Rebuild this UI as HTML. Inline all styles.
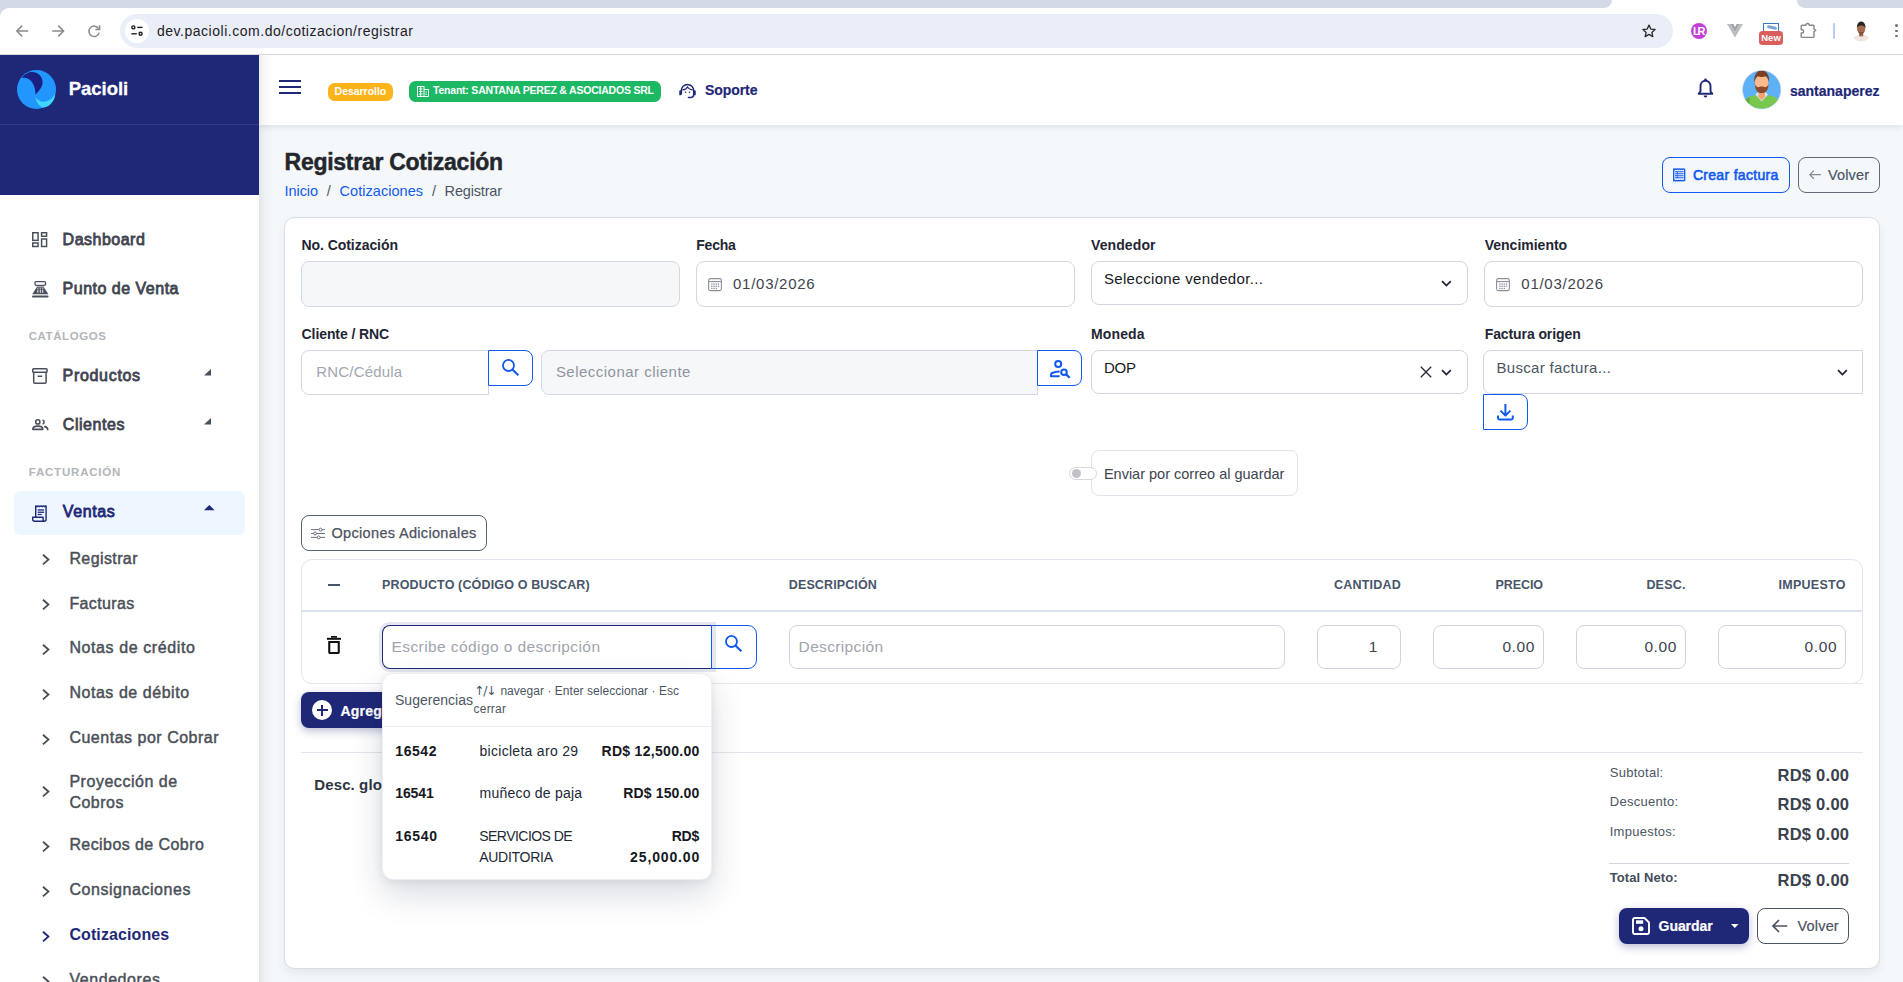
<!DOCTYPE html>
<html lang="es">
<head>
<meta charset="utf-8">
<title>Registrar Cotización - Pacioli</title>
<style>
html,body{margin:0;padding:0;}
body{width:1903px;height:982px;overflow:hidden;position:relative;background:#f5f8fb;font-family:"Liberation Sans",sans-serif;}
.b{position:absolute;box-sizing:border-box;display:block;}
.t{position:absolute;white-space:nowrap;line-height:1;display:block;}
svg{overflow:visible;}
</style>
</head>
<body>
<header class="topbar">
<div class="b" style="left:259px;top:55px;width:1644px;height:70px;background:#fff;box-shadow:0 2px 6px rgba(30,40,90,.12);"></div>
<div class="b" style="left:279.3px;top:79.8px;width:21.4px;height:2.4px;background:#1f2877;"></div>
<div class="b" style="left:279.3px;top:85.7px;width:21.4px;height:2.4px;background:#1f2877;"></div>
<div class="b" style="left:279.3px;top:91.5px;width:21.4px;height:2.4px;background:#1f2877;"></div>
<div class="b" style="left:328px;top:83px;width:65px;height:18px;background:#fdb31c;border-radius:6.500px;"></div>
<span class="t" style="left:334.60px;top:85.75px;font-size:10.5px;color:#fff;font-weight:700;letter-spacing:-0.037px;">Desarrollo</span>
<div class="b" style="left:409px;top:81px;width:252px;height:21px;background:#1cb863;border-radius:6.500px;"></div>
<svg class="b" style="left:416.5px;top:86px;" width="12" height="11" viewBox="0 0 12 11"><g fill="none" stroke="#fff" stroke-width="1"><rect x="0.5" y="0.5" width="6.5" height="10"/><path d="M7 3.500h4.500v7H7M2 3h3.500M2 5.500h3.500M2 8h3.500M8.500 6h1.500M8.500 8.200h1.500M3.700 0.500v10"/></g></svg>
<span class="t" style="left:433.00px;top:84.75px;font-size:10.5px;color:#fff;font-weight:700;letter-spacing:-0.213px;">Tenant: SANTANA PEREZ &amp; ASOCIADOS SRL</span>
<svg class="b" style="left:679px;top:83.2px;" width="17" height="15.5" viewBox="0 0 17 15.500"><g fill="none" stroke="#1f2877" stroke-linecap="round"><path d="M2.300 11V7.600a6.200 6.200 0 0 1 12.400 0V11" stroke-width="1.500"/><path d="M1.200 8.200v3.200M15.800 8.200v3.200" stroke-width="1.900"/><path d="M14.700 11.600c0 1.800-1.200 3-3 3H9.400" stroke-width="1.500"/><path d="M3.800 6.900c2.300-.2 3.900-1.200 4.700-2.900 1 1.800 2.600 2.700 4.700 2.900" stroke-width="1.200"/></g><circle cx="6.500" cy="9.300" r=".8" fill="#1f2877"/><circle cx="10.500" cy="9.300" r=".8" fill="#1f2877"/></svg>
<span class="t" style="left:705.00px;top:83.00px;font-size:14px;color:#1f2877;font-weight:700;letter-spacing:-0.065px;-webkit-text-stroke:.2px #1f2877;">Soporte</span>
<svg class="b" style="left:1697px;top:78px;" width="17" height="20" viewBox="0 0 17 20"><path d="M8.500 2.800c-3 0-5 2.400-5 5.400v5.300l-1.800 2.200h13.600l-1.800-2.200V8.200c0-3-2-5.400-5-5.400z" fill="none" stroke="#1f2877" stroke-width="1.900" stroke-linejoin="round"/><circle cx="8.500" cy="1.800" r="1.300" fill="#1f2877"/><path d="M6.600 17.600a1.900 1.900 0 0 0 3.800 0z" fill="#1f2877"/></svg>
<svg class="b" style="left:1742.2px;top:70.2px;" width="39.4" height="39.4" viewBox="0 0 39 39"><defs><clipPath id="ua"><circle cx="19.500" cy="19.500" r="18.700"/></clipPath></defs><circle cx="19.500" cy="19.500" r="19.500" fill="#dde1e8"/><g clip-path="url(#ua)"><rect width="39" height="39" fill="#5db1f8"/><path d="M0 39c0-9 6-13.500 13-14h13c7 .5 13 5 13 14z" fill="#7ac74f"/><path d="M5 28c-2 2-3 6-3 11h6c-1-5-1-8 0-11.500z" fill="#62ab3d"/><path d="M13.300 24.300l6.200 6.900 6.200-6.900-2.600-2.600h-7.200z" fill="#dbe7f8"/><path d="M16.200 19h6.600v7.600l-3.300 3.600-3.300-3.600z" fill="#f3a474"/><ellipse cx="19.500" cy="12.800" rx="6.700" ry="8.300" fill="#fcb98b"/><path d="M12.800 14.200c0 6 3 8.900 6.700 8.900s6.700-2.900 6.700-8.900c-1 2.300-2.200 2.900-3.400 2.900-1.100-.9-5.500-.9-6.600 0-1.200 0-2.400-.6-3.400-2.900z" fill="#8b4a2b"/><path d="M12.300 12.300c-1-7.300 2.600-11.900 7.200-11.900s8.200 4.600 7.200 11.900c-.6-3-1.500-5.100-3.200-6.100-2.500 1-5.500 1-8 0-1.700 1-2.600 3.100-3.200 6.100z" fill="#7a3f22"/></g></svg>
<span class="t" style="left:1790.00px;top:84.00px;font-size:14px;color:#1f2877;font-weight:700;-webkit-text-stroke:.2px #1f2877;">santanaperez</span>
</header>
<aside class="sidebar">
<div class="b" style="left:259px;top:55px;width:14px;height:927px;background:linear-gradient(90deg,rgba(0,0,0,.075),rgba(0,0,0,.03) 35%,rgba(0,0,0,0));"></div>
<div class="b" style="left:0px;top:55px;width:259px;height:927px;background:#fff;"></div>
<div class="b" style="left:0px;top:55px;width:259px;height:140px;background:#1f2877;"></div>
<div class="b" style="left:0px;top:124px;width:259px;height:1px;background:rgba(255,255,255,.10);"></div>
<svg class="b" style="left:16.6px;top:69.9px;" width="39" height="39" viewBox="0 0 39 39"><circle cx="19.5" cy="19.5" r="19.5" fill="#2196fe"/><path d="M5 7.9C7.5 3.6 11.8 1.9 15 1.9c6 0 10.6 4.300 10.600 10.300 0 5-3.600 8.400-7 12.400-.4-4.500-.8-7.800-3-11.500-2.200-3.800-6.200-5.700-10.600-5.200z" fill="#1b1f82"/><path d="M18.300 27c2 3.200 5.200 4.900 8.500 4.800 4.700-.2 9.100-3.400 11.300-8.200.5 3.400-1.500 7.800-4.600 10.600-2.400 2.200-5 3.200-8 3.400-3.500-1.800-6.300-5.800-7.200-10.600z" fill="#3ed6ff"/></svg>
<span class="t" style="left:68.70px;top:80.25px;font-size:18.5px;color:#fff;font-weight:700;letter-spacing:-0.023px;-webkit-text-stroke:.3px #fff;">Pacioli</span>
<nav>
<svg class="b" style="left:32.2px;top:232.4px;" width="15.4" height="15.2" viewBox="0 0 15.400 15.200"><g fill="none" stroke="#4a505b" stroke-width="1.500"><rect x=".75" y=".75" width="5.300" height="7.600"/><rect x="9.600" y=".75" width="5" height="3.500"/><rect x=".75" y="11" width="5.300" height="3.500"/><rect x="9.600" y="7" width="5" height="7.500"/></g></svg>
<span class="t" style="left:62.60px;top:231.50px;font-size:16px;color:#3f4550;-webkit-text-stroke:.8px #3f4550;letter-spacing:0.490px;">Dashboard</span>
<svg class="b" style="left:31.8px;top:280.7px;" width="16.6" height="16.6" viewBox="0 0 16.600 16.600"><rect x="3" y=".7" width="10.600" height="3.600" rx="1.200" fill="#fff" stroke="#4a505b" stroke-width="1.300"/><rect x="4.600" y="4.900" width="7.400" height="1.400" fill="#a6a9ae"/><path d="M4.700 6.200h7.200l4.500 7.100H.2z" fill="#4a505b"/><rect x="0" y="14.500" width="16.600" height="2.100" rx="1" fill="#4a505b"/><g fill="#fff"><rect x="5.300" y="7.300" width="1.100" height="1"/><rect x="7.750" y="7.300" width="1.100" height="1"/><rect x="10.200" y="7.300" width="1.100" height="1"/><rect x="5.400" y="9" width=".9" height="2.800"/><rect x="7.850" y="9" width=".9" height="2.800"/><rect x="10.300" y="9" width=".9" height="2.800"/></g></svg>
<span class="t" style="left:62.60px;top:280.50px;font-size:16px;color:#3f4550;-webkit-text-stroke:.8px #3f4550;letter-spacing:0.498px;">Punto de Venta</span>
<span class="t" style="left:28.70px;top:331.25px;font-size:11.5px;color:#b3b5b9;font-weight:700;letter-spacing:0.585px;">CATÁLOGOS</span>
<svg class="b" style="left:32.2px;top:368px;" width="15.8" height="16" viewBox="0 0 15.800 16"><g fill="none" stroke="#4a505b" stroke-width="1.500" stroke-linejoin="round"><rect x=".75" y=".75" width="14.300" height="3.600" rx=".8"/><path d="M1.700 4.400v9.800c0 .6.400 1 1 1h10.400c.6 0 1-.4 1-1V4.400M5.600 8.300h4.600"/></g></svg>
<span class="t" style="left:62.60px;top:367.50px;font-size:16px;color:#3f4550;-webkit-text-stroke:.8px #3f4550;letter-spacing:0.682px;">Productos</span>
<svg class="b" style="left:203.8px;top:368.7px" width="7" height="6.500" viewBox="0 0 7 6.500"><path d="M7 0v6.500H0z" fill="#4a505b"/></svg>
<svg class="b" style="left:31.8px;top:419.4px;" width="16.5" height="11.2" viewBox="0 0 16.500 11.200"><g fill="none" stroke="#4a505b" stroke-width="1.600"><circle cx="5.800" cy="2.900" r="2.100"/><path d="M.8 10.400c0-2.200 2.500-3.300 5-3.300s5 1.100 5 3.300z" stroke-linejoin="round"/><path d="M10.600 .9a2.100 2.100 0 0 1 0 4M12.300 7.400c2 .5 3.400 1.400 3.400 3v.8"/></g></svg>
<span class="t" style="left:62.80px;top:416.50px;font-size:16px;color:#3f4550;-webkit-text-stroke:.8px #3f4550;letter-spacing:0.542px;">Clientes</span>
<svg class="b" style="left:203.8px;top:417.8px" width="7" height="6.500" viewBox="0 0 7 6.500"><path d="M7 0v6.500H0z" fill="#4a505b"/></svg>
<span class="t" style="left:28.70px;top:467.25px;font-size:11.5px;color:#b3b5b9;font-weight:700;letter-spacing:0.801px;">FACTURACIÓN</span>
<div class="b" style="left:14px;top:491px;width:231px;height:44px;background:#eef6ff;border-radius:6px;"></div>
<svg class="b" style="left:32.4px;top:505px;" width="15.4" height="16.4" viewBox="0 0 15.400 16.400"><g fill="none" stroke="#1f2877" stroke-width="1.400" stroke-linejoin="round"><path d="M3.700 12.300V.9l1.300.8 1.300-.8 1.300.8 1.300-.8 1.300.8 1.300-.8 1.300.8 1.300-.8v13.300c0 1.200-.8 2-2 2H2.700c-1.100 0-2-.8-2-2v-1.900h10.400v1.900c0 1.100.6 2 1.500 2"/></g><g fill="#1f2877"><rect x="5.700" y="4.300" width="6.400" height="1.300"/><rect x="5.700" y="6.600" width="6.400" height="1.300"/><rect x="5.700" y="8.900" width="4" height="1.200"/></g></svg>
<span class="t" style="left:62.80px;top:503.50px;font-size:16px;color:#1f2877;-webkit-text-stroke:.8px #1f2877;letter-spacing:0.614px;">Ventas</span>
<svg class="b" style="left:203.7px;top:505.3px" width="10.600" height="5.200" viewBox="0 0 10.600 5.200"><path d="M5.300 0l5.300 5.200H0z" fill="#1f2877"/></svg>
<svg class="b" style="left:42.100px;top:554.40px" width="7.600" height="11.200" viewBox="0 0 7.600 11.200"><path d="M1 .8l5.400 4.800L1 10.400" fill="none" stroke="#4a4f57" stroke-width="1.900"/></svg>
<span class="t" style="left:69.40px;top:550.50px;font-size:16px;color:#4a4f57;letter-spacing:0.399px;-webkit-text-stroke:.45px #4a4f57;">Registrar</span>
<svg class="b" style="left:42.100px;top:599.40px" width="7.600" height="11.200" viewBox="0 0 7.600 11.200"><path d="M1 .8l5.400 4.800L1 10.400" fill="none" stroke="#4a4f57" stroke-width="1.900"/></svg>
<span class="t" style="left:69.40px;top:595.50px;font-size:16px;color:#4a4f57;letter-spacing:0.379px;-webkit-text-stroke:.45px #4a4f57;">Facturas</span>
<svg class="b" style="left:42.100px;top:644.00px" width="7.600" height="11.200" viewBox="0 0 7.600 11.200"><path d="M1 .8l5.400 4.800L1 10.400" fill="none" stroke="#4a4f57" stroke-width="1.900"/></svg>
<span class="t" style="left:69.40px;top:639.50px;font-size:16px;color:#4a4f57;letter-spacing:0.599px;-webkit-text-stroke:.45px #4a4f57;">Notas de crédito</span>
<svg class="b" style="left:42.100px;top:689.10px" width="7.600" height="11.200" viewBox="0 0 7.600 11.200"><path d="M1 .8l5.400 4.800L1 10.400" fill="none" stroke="#4a4f57" stroke-width="1.900"/></svg>
<span class="t" style="left:69.40px;top:684.50px;font-size:16px;color:#4a4f57;letter-spacing:0.544px;-webkit-text-stroke:.45px #4a4f57;">Notas de débito</span>
<svg class="b" style="left:42.100px;top:733.70px" width="7.600" height="11.200" viewBox="0 0 7.600 11.200"><path d="M1 .8l5.400 4.800L1 10.400" fill="none" stroke="#4a4f57" stroke-width="1.900"/></svg>
<span class="t" style="left:69.40px;top:729.50px;font-size:16px;color:#4a4f57;letter-spacing:0.511px;-webkit-text-stroke:.45px #4a4f57;">Cuentas por Cobrar</span>
<svg class="b" style="left:42.100px;top:786.40px" width="7.600" height="11.200" viewBox="0 0 7.600 11.200"><path d="M1 .8l5.400 4.800L1 10.400" fill="none" stroke="#4a4f57" stroke-width="1.900"/></svg>
<span class="t" style="left:69.40px;top:773.50px;font-size:16px;color:#4a4f57;letter-spacing:0.534px;-webkit-text-stroke:.45px #4a4f57;">Proyección de</span>
<span class="t" style="left:69.40px;top:794.50px;font-size:16px;color:#4a4f57;letter-spacing:0.484px;-webkit-text-stroke:.45px #4a4f57;">Cobros</span>
<svg class="b" style="left:42.100px;top:841.00px" width="7.600" height="11.200" viewBox="0 0 7.600 11.200"><path d="M1 .8l5.400 4.800L1 10.400" fill="none" stroke="#4a4f57" stroke-width="1.900"/></svg>
<span class="t" style="left:69.40px;top:836.50px;font-size:16px;color:#4a4f57;letter-spacing:0.422px;-webkit-text-stroke:.45px #4a4f57;">Recibos de Cobro</span>
<svg class="b" style="left:42.100px;top:886.00px" width="7.600" height="11.200" viewBox="0 0 7.600 11.200"><path d="M1 .8l5.400 4.800L1 10.400" fill="none" stroke="#4a4f57" stroke-width="1.900"/></svg>
<span class="t" style="left:69.40px;top:881.50px;font-size:16px;color:#4a4f57;letter-spacing:0.550px;-webkit-text-stroke:.45px #4a4f57;">Consignaciones</span>
<svg class="b" style="left:42.100px;top:931.10px" width="7.600" height="11.200" viewBox="0 0 7.600 11.200"><path d="M1 .8l5.400 4.800L1 10.400" fill="none" stroke="#1f2877" stroke-width="1.900"/></svg>
<span class="t" style="left:69.40px;top:926.50px;font-size:16px;color:#1f2877;font-weight:700;letter-spacing:0.101px;">Cotizaciones</span>
<svg class="b" style="left:42.100px;top:976.00px" width="7.600" height="11.200" viewBox="0 0 7.600 11.200"><path d="M1 .8l5.400 4.800L1 10.400" fill="none" stroke="#4a4f57" stroke-width="1.900"/></svg>
<span class="t" style="left:69.40px;top:971.50px;font-size:16px;color:#4a4f57;letter-spacing:0.566px;-webkit-text-stroke:.45px #4a4f57;">Vendedores</span>
</nav>
</aside>
<div class="browser-chrome">
<div class="b" style="left:0px;top:0px;width:1903px;height:55px;background:#fff;"></div>
<div class="b" style="left:0px;top:0px;width:1612px;height:8px;background:#d3dae5;border-bottom-right-radius:8px;"></div>
<div class="b" style="left:1797px;top:0px;width:106px;height:8px;background:#d3dae5;border-bottom-left-radius:8px;"></div>
<div class="b" style="left:0px;top:0px;width:12px;height:16px;background:#d3dae5;"></div>
<div class="b" style="left:0px;top:8px;width:24px;height:24px;background:#fff;border-top-left-radius:9px;"></div>
<div class="b" style="left:0px;top:54px;width:1903px;height:1px;background:#d5d7da;"></div>
<div class="b" style="left:120px;top:14px;width:1553px;height:34px;background:#e9eef9;border-radius:17px;"></div>
<div class="b" style="left:125px;top:18.5px;width:24px;height:24px;background:#fff;border-radius:12px;"></div>
<span class="t" style="left:157.00px;top:24.00px;font-size:14px;color:#1f2023;letter-spacing:0.518px;">dev.pacioli.com.do/cotizacion/registrar</span>
<svg class="b" style="left:16px;top:25px;" width="12.4" height="12" viewBox="0 0 12.4 12"><path d="M12.2 6H1.2M6.2 0.6L0.8 6l5.4 5.4" fill="none" stroke="#8b8b8b" stroke-width="1.5"/></svg>
<svg class="b" style="left:52px;top:25px;" width="12.4" height="12" viewBox="0 0 12.4 12"><path d="M0.2 6h11M6.2 0.6L11.6 6l-5.4 5.4" fill="none" stroke="#8b8b8b" stroke-width="1.5"/></svg>
<svg class="b" style="left:88px;top:25px;" width="12.4" height="12" viewBox="0 0 12.4 12"><path d="M10.6 3.6A5.2 5.2 0 1 0 11.2 7.6" fill="none" stroke="#8b8b8b" stroke-width="1.5"/><path d="M11.6 0.2v4.2h-4.2" fill="none" stroke="#8b8b8b" stroke-width="1.5"/></svg>
<svg class="b" style="left:131px;top:25.4px;" width="12" height="11.4" viewBox="0 0 12 11.4"><g fill="none" stroke="#1f2023" stroke-width="1.4"><circle cx="2.4" cy="2.4" r="1.5"/><path d="M6.2 2.4h5.4"/><circle cx="9.6" cy="8.8" r="1.5"/><path d="M0.4 8.8h5.4"/></g></svg>
<svg class="b" style="left:1640.5px;top:22.5px;" width="16" height="16" viewBox="0 0 24 24"><path d="M12 3.2l2.7 5.9 6.4.7-4.8 4.3 1.4 6.3L12 17.1l-5.7 3.3 1.4-6.3-4.8-4.3 6.4-.7z" fill="none" stroke="#2b2b2b" stroke-width="2" stroke-linejoin="round"/></svg>
<div class="b" style="left:1691px;top:22.6px;width:16px;height:16px;background:#c23fd6;border-radius:8px;"></div>
<span class="t" style="left:1693.00px;top:25.50px;font-size:11px;color:#fff;font-weight:700;letter-spacing:-2.200px;">LR</span>
<svg class="b" style="left:1727px;top:24px;" width="16" height="13.5" viewBox="0 0 16 13.5"><path d="M0 0h3.6L8 8.2 12.4 0H16L8 13.5z" fill="#b9bcc0"/><path d="M3.6 0h2.8L8 3.2 9.6 0h2.8L8 8.2z" fill="#9fa3a8"/></svg>
<div class="b" style="left:1762.5px;top:23px;width:16.5px;height:10px;border:1.5px solid #3b78c4;background:#fff;"></div>
<div class="b" style="left:1767px;top:25.5px;width:10px;height:3px;background:#7fa4d4;border-radius:2px;transform:rotate(12deg);"></div>
<div class="b" style="left:1759px;top:31px;width:24px;height:14px;background:#d95f5d;border-radius:3.5px;"></div>
<span class="t" style="left:1761.20px;top:32.75px;font-size:9.5px;color:#fff;font-weight:700;letter-spacing:0.033px;">New</span>
<svg class="b" style="left:1799.6px;top:22.2px;" width="16.5" height="16" viewBox="0 0 16.500 16"><path d="M2.200 3.200H5.900A1.700 1.700 0 0 1 9.300 3.200H13A1 1 0 0 1 14 4.200V7L15.800 8.300 14 9.600V14.400A1 1 0 0 1 13 15.400H2.200A1 1 0 0 1 1.200 14.400V11H2A1.600 1.600 0 0 0 2 7.800H1.200V4.200A1 1 0 0 1 2.200 3.200Z" fill="none" stroke="#858585" stroke-width="1.400" stroke-linejoin="round"/></svg>
<div class="b" style="left:1833px;top:23px;width:1.6px;height:15.5px;background:#b9cdf6;border-radius:1px;"></div>
<svg class="b" style="left:1850.8px;top:20.6px;" width="20.4" height="20.4" viewBox="0 0 20 20"><defs><clipPath id="cpa"><circle cx="10" cy="10" r="10"/></clipPath></defs><g clip-path="url(#cpa)"><rect width="20" height="20" fill="#fff"/><path d="M1.500 20c0-4.500 3.500-6.500 8.500-6.500s8.500 2 8.500 6.500z" fill="#f1e6df"/><rect x="8" y="10.500" width="4" height="4.500" fill="#9c6447"/><ellipse cx="10" cy="7.800" rx="4" ry="5" fill="#a36b4d"/><path d="M5.800 7.200C5.600 3 7.600 .6 10 .6s4.400 2.400 4.200 6.600c-.7-2-1.700-2.900-4.200-2.900s-3.500.9-4.200 2.900z" fill="#2b2624"/><path d="M7 9.500c.8 1.800 1.800 3.800 3 3.800s2.200-2 3-3.800c-.5 1-1.800 1.500-3 1.500s-2.500-.5-3-1.500z" fill="#5a3a2c" opacity=".6"/></g></svg>
<div class="b" style="left:1895.2px;top:24.3px;width:2.6px;height:2.6px;background:#6e6e6e;border-radius:2px;"></div>
<div class="b" style="left:1895.2px;top:29.5px;width:2.6px;height:2.6px;background:#6e6e6e;border-radius:2px;"></div>
<div class="b" style="left:1895.2px;top:34.7px;width:2.6px;height:2.6px;background:#6e6e6e;border-radius:2px;"></div>
</div>
<main>
<div class="page-head">
<span class="t" style="left:284.60px;top:150.50px;font-size:23px;color:#23262b;font-weight:700;letter-spacing:-0.272px;-webkit-text-stroke:.45px #23262b;">Registrar Cotización</span>
<span class="t" style="left:284.60px;top:183.75px;font-size:14.5px;color:#1259f0;letter-spacing:-0.090px;">Inicio</span>
<span class="t" style="left:326.80px;top:183.75px;font-size:14.5px;color:#4b5563;">/</span>
<span class="t" style="left:339.60px;top:183.75px;font-size:14.5px;color:#1259f0;letter-spacing:0.035px;">Cotizaciones</span>
<span class="t" style="left:432.00px;top:183.75px;font-size:14.5px;color:#4b5563;">/</span>
<span class="t" style="left:444.60px;top:183.75px;font-size:14.5px;color:#4b5563;letter-spacing:-0.178px;">Registrar</span>
<div class="b" style="left:1662px;top:157px;width:128px;height:36px;border:1.500px solid #1259f0;border-radius:8px;"></div>
<svg class="b" style="left:1673.4px;top:168.3px;" width="12.6" height="13.4" viewBox="0 0 12.600 13.400"><path d="M.7 .9l1 .6 1-.6 1 .6 1-.6 1 .6 1-.6 1 .6 1-.6 1 .6 1-.6 1 .6v10.800l-1 .6-1-.6-1 .6-1-.6-1 .6-1-.6-1 .6-1-.6-1 .6-1-.6-1 .6z" fill="none" stroke="#1259f0" stroke-width="1.300" stroke-linejoin="round"/><path d="M2 3.700h8.600M2 5.700h8.600M2 7.700h8.600M2 9.700h8.600" stroke="#1259f0" stroke-width="1.100"/><path d="M4.300 3.200v7" stroke="#1259f0" stroke-width=".7"/></svg>
<span class="t" style="left:1692.90px;top:168.00px;font-size:14px;color:#1259f0;letter-spacing:0.308px;-webkit-text-stroke:.6px #1259f0;">Crear factura</span>
<div class="b" style="left:1798px;top:157px;width:82px;height:36px;border:1.200px solid #646a75;border-radius:8px;"></div>
<svg class="b" style="left:1808.8px;top:170.3px;" width="12.2" height="9.4" viewBox="0 0 12.200 9.400"><path d="M12 4.700H1M4.800 .6L.8 4.700l4 4.100" fill="none" stroke="#858a93" stroke-width="1.200"/></svg>
<span class="t" style="left:1828.00px;top:167.75px;font-size:14.5px;color:#4b5563;letter-spacing:0.140px;-webkit-text-stroke:.2px #4b5563;">Volver</span>
</div>
<section class="card">
<form>
<div class="b" style="left:284px;top:217px;width:1596px;height:752px;background:#fff;border:1px solid #dadde1;border-radius:10.500px;box-shadow:0 5px 10px rgba(20,30,50,.07);"></div>
<span class="t" style="left:301.50px;top:238.00px;font-size:14px;color:#1f2633;font-weight:700;letter-spacing:-0.056px;">No. Cotización</span>
<span class="t" style="left:696.30px;top:238.00px;font-size:14px;color:#1f2633;font-weight:700;letter-spacing:-0.241px;">Fecha</span>
<span class="t" style="left:1091.00px;top:238.00px;font-size:14px;color:#1f2633;font-weight:700;letter-spacing:0.101px;">Vendedor</span>
<span class="t" style="left:1484.70px;top:238.00px;font-size:14px;color:#1f2633;font-weight:700;">Vencimiento</span>
<div class="b" style="left:301px;top:261px;width:379px;height:46px;background:#f6f7f9;border:1px solid #d3d8e0;border-radius:8px;"></div>
<div class="b" style="left:696px;top:261px;width:379px;height:46px;background:#fff;border:1px solid #d3d8e0;border-radius:8px;"></div>
<div class="b" style="left:1091px;top:261px;width:377px;height:44px;background:#fff;border:1px solid #d3d8e0;border-radius:8px;"></div>
<div class="b" style="left:1484px;top:261px;width:379px;height:46px;background:#fff;border:1px solid #d3d8e0;border-radius:8px;"></div>
<svg class="b" style="left:707.8px;top:277px;" width="14" height="14.6" viewBox="0 0 14 14.600"><g fill="none" stroke="#8a8f98" stroke-width="1.100"><rect x=".6" y="1.600" width="12.800" height="12" rx="1.800"/><path d="M.6 4.600h12.800"/></g><g fill="#8a8f98"><rect x="3.200" y="6.400" width="1.300" height="1.300"/><rect x="5.400" y="6.400" width="1.300" height="1.300"/><rect x="7.600" y="6.400" width="1.300" height="1.300"/><rect x="9.800" y="6.400" width="1.300" height="1.300"/><rect x="3.200" y="8.600" width="1.300" height="1.300"/><rect x="5.400" y="8.600" width="1.300" height="1.300"/><rect x="7.600" y="8.600" width="1.300" height="1.300"/><rect x="9.800" y="8.600" width="1.300" height="1.300"/><rect x="3.200" y="10.800" width="1.300" height="1.300"/><rect x="5.400" y="10.800" width="1.300" height="1.300"/><rect x="7.600" y="10.800" width="1.300" height="1.300"/></g></svg>
<span class="t" style="left:733.00px;top:276.00px;font-size:15px;color:#3d4450;letter-spacing:0.736px;">01/03/2026</span>
<svg class="b" style="left:1496.4px;top:277px;" width="14" height="14.6" viewBox="0 0 14 14.600"><g fill="none" stroke="#8a8f98" stroke-width="1.100"><rect x=".6" y="1.600" width="12.800" height="12" rx="1.800"/><path d="M.6 4.600h12.800"/></g><g fill="#8a8f98"><rect x="3.200" y="6.400" width="1.300" height="1.300"/><rect x="5.400" y="6.400" width="1.300" height="1.300"/><rect x="7.600" y="6.400" width="1.300" height="1.300"/><rect x="9.800" y="6.400" width="1.300" height="1.300"/><rect x="3.200" y="8.600" width="1.300" height="1.300"/><rect x="5.400" y="8.600" width="1.300" height="1.300"/><rect x="7.600" y="8.600" width="1.300" height="1.300"/><rect x="9.800" y="8.600" width="1.300" height="1.300"/><rect x="3.200" y="10.800" width="1.300" height="1.300"/><rect x="5.400" y="10.800" width="1.300" height="1.300"/><rect x="7.600" y="10.800" width="1.300" height="1.300"/></g></svg>
<span class="t" style="left:1521.30px;top:276.00px;font-size:15px;color:#3d4450;letter-spacing:0.736px;">01/03/2026</span>
<span class="t" style="left:1103.90px;top:271.00px;font-size:15px;color:#16191f;letter-spacing:0.344px;">Seleccione vendedor...</span>
<svg class="b" style="left:1441.4px;top:279.6px;" width="10.8" height="7" viewBox="0 0 10.800 7"><path d="M1 1.200l4.400 4.400L9.800 1.200" fill="none" stroke="#1f2430" stroke-width="1.700"/></svg>
<span class="t" style="left:301.60px;top:327.00px;font-size:14px;color:#1f2633;font-weight:700;letter-spacing:-0.098px;">Cliente / RNC</span>
<span class="t" style="left:1091.00px;top:327.00px;font-size:14px;color:#1f2633;font-weight:700;letter-spacing:0.122px;">Moneda</span>
<span class="t" style="left:1484.70px;top:327.00px;font-size:14px;color:#1f2633;font-weight:700;letter-spacing:-0.096px;">Factura origen</span>
<div class="b" style="left:301px;top:350px;width:188px;height:45px;background:#fff;border:1px solid #d3d8e0;border-radius:8px 0 0 8px;"></div>
<span class="t" style="left:316.20px;top:364.00px;font-size:15px;color:#a1a6af;letter-spacing:0.200px;">RNC/Cédula</span>
<div class="b" style="left:488px;top:350px;width:45px;height:36px;background:#fff;border:1.500px solid #1259f0;border-radius:0 8px 8px 0;"></div>
<svg class="b" style="left:501.5px;top:359.3px;" width="17" height="17" viewBox="0 0 16 16"><circle cx="6.100" cy="6.100" r="5.200" fill="none" stroke="#1259f0" stroke-width="1.700"/><path d="M9.800 9.800l5.600 5.600" stroke="#1259f0" stroke-width="2"/></svg>
<div class="b" style="left:541px;top:350px;width:497px;height:45px;background:#f6f7f9;border:1px solid #d3d8e0;border-radius:8px 0 0 8px;"></div>
<span class="t" style="left:555.90px;top:364.00px;font-size:15px;color:#8f95a0;letter-spacing:0.477px;">Seleccionar cliente</span>
<div class="b" style="left:1037px;top:350px;width:45px;height:36px;background:#fff;border:1.500px solid #1259f0;border-radius:0 8px 8px 0;"></div>
<svg class="b" style="left:1049.7px;top:359.8px;" width="20.5" height="18.2" viewBox="0 0 20.500 18.200"><g fill="none" stroke="#1259f0" stroke-width="2" stroke-linejoin="round"><circle cx="8.200" cy="4.100" r="3"/><path d="M9.600 11.600C5 11.800 1 13 1 14.500v1.700h8.600"/><circle cx="14" cy="12.300" r="2.800"/><path d="M16.100 14.400l3.600 3.400" stroke-width="2.300"/></g></svg>
<div class="b" style="left:1091px;top:350px;width:377px;height:44px;background:#fff;border:1px solid #d3d8e0;border-radius:8px;"></div>
<span class="t" style="left:1104.00px;top:360.00px;font-size:15px;color:#16191f;letter-spacing:-0.253px;">DOP</span>
<svg class="b" style="left:1419.7px;top:366px;" width="12" height="12" viewBox="0 0 12 12"><path d="M.8 .8l10.400 10.400M11.200 .8L.8 11.200" stroke="#2b2f38" stroke-width="1.400"/></svg>
<svg class="b" style="left:1441.4px;top:368.6px;" width="10.8" height="7" viewBox="0 0 10.800 7"><path d="M1 1.200l4.400 4.400L9.800 1.200" fill="none" stroke="#1f2430" stroke-width="1.700"/></svg>
<div class="b" style="left:1483px;top:350px;width:380px;height:43.5px;background:#fff;border:1px solid #d3d8e0;border-radius:8px 0 0 8px;"></div>
<span class="t" style="left:1496.40px;top:360.00px;font-size:15px;color:#4b5563;letter-spacing:0.330px;">Buscar factura...</span>
<svg class="b" style="left:1836.6px;top:368.6px;" width="10.8" height="7" viewBox="0 0 10.800 7"><path d="M1 1.200l4.400 4.400L9.800 1.200" fill="none" stroke="#1f2430" stroke-width="1.700"/></svg>
<div class="b" style="left:1483px;top:394.2px;width:45px;height:35.8px;background:#fff;border:1.400px solid #1259f0;border-radius:0 8px 8px 0;"></div>
<svg class="b" style="left:1497.3px;top:403.8px;" width="16.8" height="16.4" viewBox="0 0 16.800 16.400"><g fill="none" stroke="#1259f0" stroke-width="2" stroke-linejoin="round"><path d="M8.400 0v11M3.400 6.600l5 5 5-5"/><path d="M1 11.600v2.400c0 .8.600 1.400 1.400 1.400h12c.8 0 1.400-.6 1.400-1.400v-2.400"/></g></svg>
<div class="b" style="left:1091px;top:450.2px;width:207px;height:46.2px;background:#fff;border:1px solid #dfe3ea;border-radius:8px;"></div>
<div class="b" style="left:1069px;top:466.5px;width:27.5px;height:13.5px;background:#fff;border:1px solid #d4d7dc;border-radius:7px;"></div>
<div class="b" style="left:1071.6px;top:468.8px;width:9px;height:9px;background:#bfc2c7;border-radius:5px;"></div>
<span class="t" style="left:1103.90px;top:466.75px;font-size:14.5px;color:#3d4450;">Enviar por correo al guardar</span>
<div class="b" style="left:301px;top:515px;width:186px;height:36px;background:#fff;border:1.300px solid #566170;border-radius:8px;"></div>
<svg class="b" style="left:311.2px;top:526.5px;" width="14" height="13" viewBox="0 0 15.500 13"><g fill="none" stroke="#5b616d" stroke-width="1"><path d="M0 2.200h8.800M12.200 2.200h3.300M0 6.500h2.800M6.200 6.500h9.300M0 10.800h6.800M10.200 10.800h5.300"/><circle cx="10.500" cy="2.200" r="1.600"/><circle cx="4.500" cy="6.500" r="1.600"/><circle cx="8.500" cy="10.800" r="1.600"/></g></svg>
<span class="t" style="left:331.50px;top:525.75px;font-size:14.5px;color:#4b5260;letter-spacing:0.324px;-webkit-text-stroke:.25px #4b5260;">Opciones Adicionales</span>
<div class="items">
<div class="b" style="left:301px;top:559px;width:1562px;height:124.5px;background:#fff;border:1px solid #e1e6ee;border-radius:11px;"></div>
<div class="b" style="left:302px;top:609.5px;width:1560px;height:2px;background:#d9e1ec;"></div>
<div class="b" style="left:309px;top:682.6px;width:1554px;height:1px;background:#e4e8ee;"></div>
<div class="b" style="left:327.7px;top:584.2px;width:12.5px;height:1.6px;background:#475569;"></div>
<span class="t" style="left:382.00px;top:578.75px;font-size:12.5px;color:#475569;font-weight:700;letter-spacing:0.150px;">PRODUCTO (CÓDIGO O BUSCAR)</span>
<span class="t" style="left:788.80px;top:578.75px;font-size:12.5px;color:#475569;font-weight:700;letter-spacing:0.118px;">DESCRIPCIÓN</span>
<span class="t" style="left:1334.00px;top:578.75px;font-size:12.5px;color:#475569;font-weight:700;letter-spacing:0.204px;">CANTIDAD</span>
<span class="t" style="left:1495.50px;top:578.75px;font-size:12.5px;color:#475569;font-weight:700;letter-spacing:-0.085px;">PRECIO</span>
<span class="t" style="left:1646.40px;top:578.75px;font-size:12.5px;color:#475569;font-weight:700;letter-spacing:0.199px;">DESC.</span>
<span class="t" style="left:1778.50px;top:578.75px;font-size:12.5px;color:#475569;font-weight:700;letter-spacing:0.277px;">IMPUESTO</span>
<svg class="b" style="left:327px;top:636px;" width="14" height="18" viewBox="0 0 14 18"><g fill="#111"><rect x="4" y="0" width="6" height="1.700"/><rect x="0" y="1.800" width="14" height="2"/><path d="M1.200 5h11.600v11.200c0 1-.8 1.800-1.800 1.800H3c-1 0-1.800-.8-1.800-1.800z M3.300 6.900v9h7.400v-9z" fill-rule="evenodd"/></g></svg>
<div class="b" style="left:711px;top:625px;width:46px;height:43.7px;background:#fff;border:1.500px solid #1259f0;border-radius:0 9px 9px 0;"></div>
<svg class="b" style="left:724.8px;top:635.1px;" width="17" height="17" viewBox="0 0 16 16"><circle cx="6.100" cy="6.100" r="5.200" fill="none" stroke="#1259f0" stroke-width="1.700"/><path d="M9.800 9.800l5.600 5.600" stroke="#1259f0" stroke-width="2"/></svg>
<div class="b" style="left:378.5px;top:621.5px;width:337px;height:50.7px;background:rgba(31,40,119,.11);border-radius:11px 0 0 11px;"></div>
<div class="b" style="left:382px;top:625px;width:330px;height:43.7px;background:#fff;border:1.500px solid #1f2877;border-right-color:#1259f0;border-radius:8px 0 0 8px;"></div>
<span class="t" style="left:391.50px;top:638.75px;font-size:15.5px;color:#a0a4ab;letter-spacing:0.415px;">Escribe código o descripción</span>
<div class="b" style="left:789px;top:625px;width:496px;height:43.7px;background:#fff;border:1px solid #d0d5dd;border-radius:8px;"></div>
<span class="t" style="left:798.60px;top:638.75px;font-size:15.5px;color:#a0a4ab;letter-spacing:0.352px;">Descripción</span>
<div class="b" style="left:1317px;top:625px;width:84px;height:43.7px;background:#fff;border:1px solid #d0d5dd;border-radius:8px;"></div>
<div class="b" style="left:1433px;top:625px;width:111px;height:43.7px;background:#fff;border:1px solid #d0d5dd;border-radius:8px;"></div>
<div class="b" style="left:1576px;top:625px;width:110px;height:43.7px;background:#fff;border:1px solid #d0d5dd;border-radius:8px;"></div>
<div class="b" style="left:1718px;top:625px;width:128px;height:43.7px;background:#fff;border:1px solid #d0d5dd;border-radius:8px;"></div>
<span class="t" style="left:1368.68px;top:638.75px;font-size:15.5px;color:#3d4450;">1</span>
<span class="t" style="left:1502.40px;top:638.75px;font-size:15.5px;color:#3d4450;letter-spacing:0.611px;">0.00</span>
<span class="t" style="left:1644.40px;top:638.75px;font-size:15.5px;color:#3d4450;letter-spacing:0.611px;">0.00</span>
<span class="t" style="left:1804.60px;top:638.75px;font-size:15.5px;color:#3d4450;letter-spacing:0.611px;">0.00</span>
<div class="b" style="left:301px;top:692px;width:200px;height:36px;background:#1f2877;border-radius:8px;box-shadow:0 3px 8px rgba(30,39,114,.30);"></div>
<div class="b" style="left:312px;top:700px;width:20px;height:20px;background:#fff;border-radius:10px;"></div>
<div class="b" style="left:316.5px;top:709px;width:11px;height:2.2px;background:#1f2877;"></div>
<div class="b" style="left:320.9px;top:704.6px;width:2.2px;height:11px;background:#1f2877;"></div>
<span class="t" style="left:340.50px;top:704.00px;font-size:14px;color:#fff;font-weight:700;letter-spacing:0.185px;-webkit-text-stroke:.2px #fff;">Agregar producto</span>
<div class="b" style="left:301px;top:751.5px;width:1562px;height:1.3px;background:#e3e7ed;"></div>
<span class="t" style="left:314.30px;top:777.00px;font-size:15px;color:#2f3541;font-weight:700;letter-spacing:0.104px;">Desc. global</span>
</div>
<div class="totals">
<span class="t" style="left:1609.70px;top:766.00px;font-size:13px;color:#4b5563;letter-spacing:0.273px;">Subtotal:</span>
<span class="t" style="left:1777.50px;top:766.75px;font-size:16.5px;color:#3a404c;font-weight:700;letter-spacing:0.256px;">RD$ 0.00</span>
<span class="t" style="left:1609.70px;top:795.00px;font-size:13px;color:#4b5563;letter-spacing:0.304px;">Descuento:</span>
<span class="t" style="left:1777.50px;top:795.75px;font-size:16.5px;color:#3a404c;font-weight:700;letter-spacing:0.256px;">RD$ 0.00</span>
<span class="t" style="left:1609.70px;top:825.00px;font-size:13px;color:#4b5563;letter-spacing:0.268px;">Impuestos:</span>
<span class="t" style="left:1777.50px;top:825.75px;font-size:16.5px;color:#3a404c;font-weight:700;letter-spacing:0.256px;">RD$ 0.00</span>
<div class="b" style="left:1609.3px;top:863px;width:239.6px;height:1.2px;background:#d3d8de;"></div>
<span class="t" style="left:1609.70px;top:871.00px;font-size:13px;color:#454d5a;font-weight:700;letter-spacing:0.088px;">Total Neto:</span>
<span class="t" style="left:1777.50px;top:871.75px;font-size:16.5px;color:#3a404c;font-weight:700;letter-spacing:0.256px;">RD$ 0.00</span>
<div class="b" style="left:1619px;top:908.3px;width:130px;height:36px;background:#1f2877;border-radius:8px;box-shadow:0 3px 8px rgba(30,39,114,.30);"></div>
<svg class="b" style="left:1631.9px;top:917px;" width="18" height="18" viewBox="0 0 18 18"><path d="M2.800 1h9.700l4.500 4.500v9.700c0 1-.8 1.800-1.800 1.800H2.800C1.800 17 1 16.200 1 15.200V2.800C1 1.800 1.800 1 2.800 1z" fill="none" stroke="#fff" stroke-width="1.900" stroke-linejoin="round"/><rect x="4" y="3.300" width="7.200" height="3.500" fill="#fff"/><circle cx="9" cy="11.800" r="2.500" fill="#fff"/></svg>
<span class="t" style="left:1658.60px;top:919.00px;font-size:14px;color:#fff;font-weight:700;letter-spacing:-0.077px;-webkit-text-stroke:.2px #fff;">Guardar</span>
<svg class="b" style="left:1731.3px;top:924.2px" width="7.600" height="4" viewBox="0 0 7.600 4"><path d="M0 0h7.600L3.800 4z" fill="#fff"/></svg>
<div class="b" style="left:1757px;top:908.3px;width:92px;height:36px;background:#fff;border:1.300px solid #4b5260;border-radius:8px;"></div>
<svg class="b" style="left:1771.9px;top:918.5px;" width="15.5" height="14" viewBox="0 0 15.500 14"><path d="M15.300 7H1.200M7 1L1 7l6 6" fill="none" stroke="#4b5260" stroke-width="1.700"/></svg>
<span class="t" style="left:1797.50px;top:918.75px;font-size:14.5px;color:#4b5260;letter-spacing:0.180px;-webkit-text-stroke:.2px #4b5260;">Volver</span>
</div>
<div class="suggestions">
<div class="b" style="left:382px;top:673.3px;width:329.5px;height:206.7px;background:#fff;border:1px solid #eceff3;border-radius:11px;box-shadow:0 14px 34px rgba(20,30,70,.16),0 2px 8px rgba(20,30,70,.08);"></div>
<div class="b" style="left:383px;top:726px;width:327.5px;height:1px;background:#eceef2;"></div>
<span class="t" style="left:395.00px;top:693.00px;font-size:14px;color:#4b5563;letter-spacing:0.017px;">Sugerencias</span>
<span class="t" style="left:474.00px;top:684.75px;font-size:12.5px;color:#4b5563;letter-spacing:-1.330px;font-family:'DejaVu Sans',sans-serif;">↑/↓</span>
<span class="t" style="left:500.40px;top:685.00px;font-size:12px;color:#4b5563;letter-spacing:0.037px;">navegar · Enter seleccionar · Esc</span>
<span class="t" style="left:473.50px;top:703.00px;font-size:12px;color:#4b5563;letter-spacing:0.232px;">cerrar</span>
<span class="t" style="left:395.30px;top:744.00px;font-size:14px;color:#15181e;font-weight:700;letter-spacing:0.567px;">16542</span>
<span class="t" style="left:479.50px;top:744.00px;font-size:14px;color:#222834;letter-spacing:0.289px;">bicicleta aro 29</span>
<span class="t" style="left:601.50px;top:744.00px;font-size:14px;color:#15181e;font-weight:700;letter-spacing:0.302px;">RD$ 12,500.00</span>
<span class="t" style="left:395.30px;top:786.00px;font-size:14px;color:#15181e;font-weight:700;letter-spacing:-0.133px;">16541</span>
<span class="t" style="left:479.50px;top:786.00px;font-size:14px;color:#222834;letter-spacing:0.228px;">muñeco de paja</span>
<span class="t" style="left:623.30px;top:786.00px;font-size:14px;color:#15181e;font-weight:700;letter-spacing:0.142px;">RD$ 150.00</span>
<span class="t" style="left:395.30px;top:829.00px;font-size:14px;color:#15181e;font-weight:700;letter-spacing:0.717px;">16540</span>
<span class="t" style="left:479.20px;top:829.00px;font-size:14px;color:#222834;letter-spacing:-0.530px;">SERVICIOS DE</span>
<span class="t" style="left:479.20px;top:850.00px;font-size:14px;color:#222834;letter-spacing:-0.272px;">AUDITORIA</span>
<span class="t" style="left:671.70px;top:829.00px;font-size:14px;color:#15181e;font-weight:700;letter-spacing:-0.204px;">RD$</span>
<span class="t" style="left:630.10px;top:850.00px;font-size:14px;color:#15181e;font-weight:700;letter-spacing:0.865px;">25,000.00</span>
</div>
</form>
</section>
</main>
</body>
</html>
